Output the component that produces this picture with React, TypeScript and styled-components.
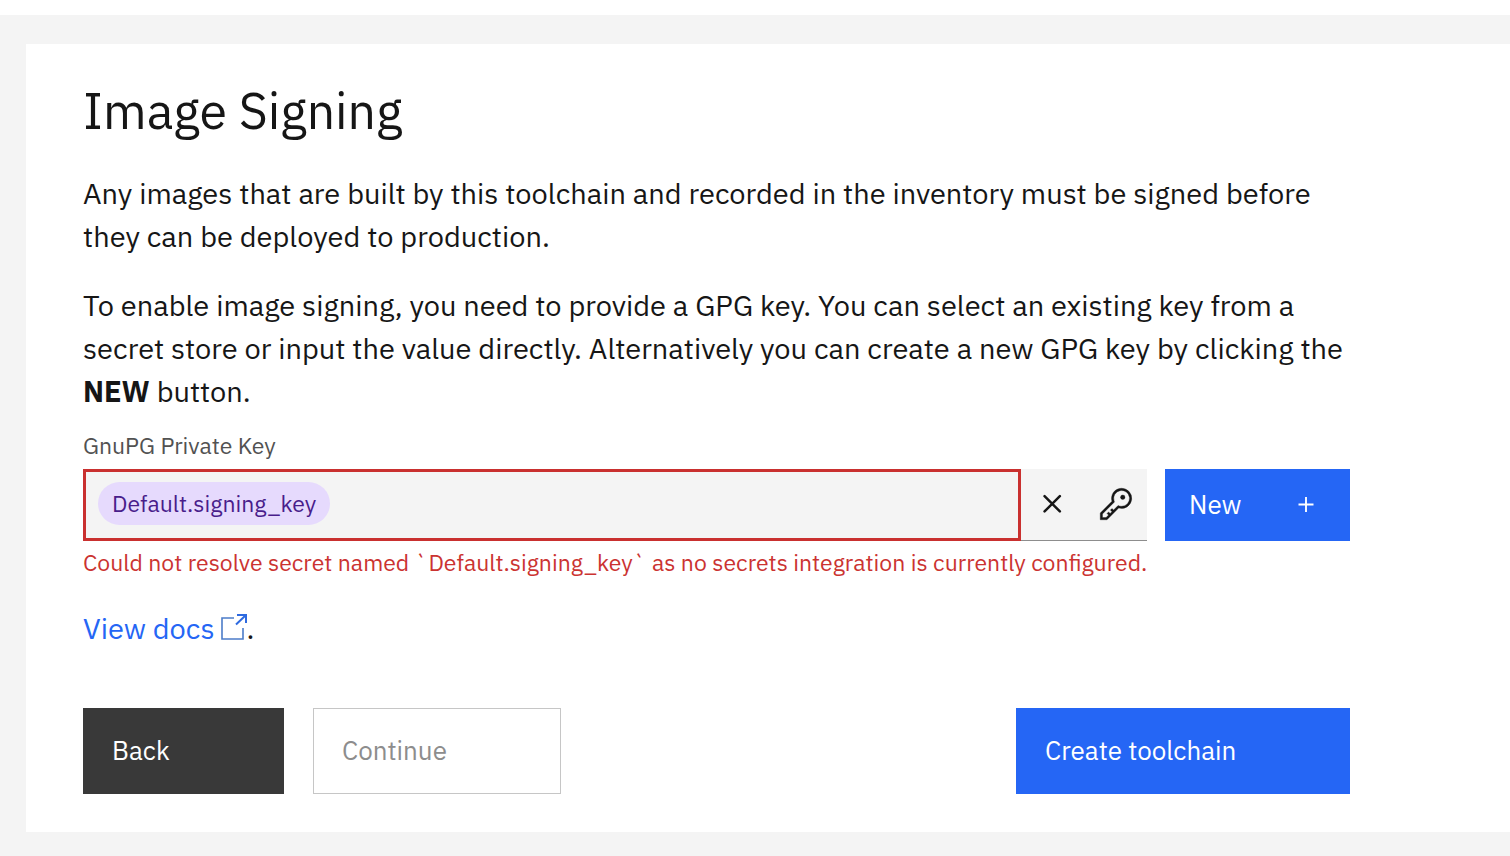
import React, { useState } from 'react';
import styled, { createGlobalStyle } from 'styled-components';

const GlobalStyle = createGlobalStyle`
  *, *::before, *::after { box-sizing: border-box; }
  body {
    margin: 0;
    background: #f4f4f4;
    color: #161616;
    font-family: "IBM Plex Sans", Roboto, "Noto Sans", sans-serif;
    font-size: 29px;
    line-height: 43px;
  }
  button, input { font: inherit; color: inherit; }
`;

const TopBar = styled.header`
  height: 15px;
  background: #fff;
`;

const Page = styled.main`
  padding: 29px 0 24px 26px;
`;

const Card = styled.section`
  background: #fff;
  padding: 35px 57px 38px;
`;

const Content = styled.form`
  max-width: 1267px;
`;

const Title = styled.h1`
  margin: 0;
  font-size: 50px;
  font-weight: 400;
  line-height: 64px;
`;

const Paragraph = styled.p`
  margin: 29px 0 0;

  & + & { margin-top: 26px; }
`;

const FieldLabel = styled.label`
  display: block;
  margin: 16px 0 8px;
  font-size: 23px;
  line-height: 32px;
  color: #525252;
`;

const FieldRow = styled.div`
  display: flex;
  gap: 18px;
  height: 72px;
`;

const FieldGroup = styled.div`
  display: flex;
  flex: 1;
  min-width: 0;
  background: #f4f4f4;
`;

const SecretBox = styled.div`
  display: flex;
  flex: 1;
  min-width: 0;
  align-items: center;
  padding: 0 12px;
  border: 3px solid #c9302f;
`;

const Chip = styled.span`
  flex: none;
  margin-bottom: 4px;
  padding: 0 14px;
  border-radius: 22px;
  background: #e6dafd;
  color: #491d8b;
  font-size: 23px;
  line-height: 43px;
`;

const SecretInput = styled.input`
  flex: 1;
  min-width: 0;
  padding: 0 8px;
  border: 0;
  outline: 0;
  background: transparent;
  font-size: 23px;
`;

const FieldActions = styled.div`
  display: flex;
  border-bottom: 1px solid #8d8d8d;
`;

const IconButton = styled.button`
  display: flex;
  align-items: center;
  justify-content: center;
  width: 63px;
  padding: 0 0 2px;
  border: 0;
  background: transparent;
  cursor: pointer;
`;

const Icon = styled.svg<{ $size: number }>`
  display: block;
  flex: none;
  width: ${p => p.$size}px;
  height: ${p => p.$size}px;
  fill: currentColor;
`;

const ErrorText = styled.p`
  margin: 5px 0 0;
  font-size: 23px;
  line-height: 32px;
  color: #cb3331;
`;

const Docs = styled.p`
  margin: 29px 0 0;
`;

const DocsLink = styled.a`
  color: #2566f5;
  text-decoration: none;
`;

const LaunchIcon = styled.svg`
  width: 26px;
  height: 26px;
  margin-left: 6px;
  vertical-align: -1px;
  fill: none;
`;

const ButtonRow = styled.div`
  display: flex;
  gap: 29px;
  margin-top: 58px;
`;

const variants = {
  primary: { background: '#2566f5', color: '#fff', border: '#2566f5' },
  secondary: { background: '#393939', color: '#fff', border: '#393939' },
  disabled: { background: '#fff', color: '#8d8d8d', border: '#c6c6c6' },
};

const Button = styled.button<{
  $variant: keyof typeof variants;
  $width: number;
  $compact?: boolean;
  $end?: boolean;
}>`
  display: flex;
  align-items: center;
  justify-content: space-between;
  flex: none;
  width: ${p => p.$width}px;
  height: ${p => (p.$compact ? 72 : 86)}px;
  padding: 0 28px 2px ${p => (p.$compact ? 23 : 28)}px;
  margin-left: ${p => (p.$end ? 'auto' : '0')};
  border: 1px solid ${p => variants[p.$variant].border};
  background: ${p => variants[p.$variant].background};
  color: ${p => variants[p.$variant].color};
  font-size: 26px;
  line-height: 32px;
  text-align: left;
  cursor: ${p => (p.$variant === 'disabled' ? 'not-allowed' : 'pointer')};
`;

export default function App() {
  const [secret, setSecret] = useState('');

  return (
    <>
      <GlobalStyle />
      <TopBar />
      <Page>
        <Card>
          <Content onSubmit={e => e.preventDefault()}>
            <Title>Image Signing</Title>
            <Paragraph>
              Any images that are built by this toolchain and recorded in the inventory must be
              signed before they can be deployed to production.
            </Paragraph>
            <Paragraph>
              To enable image signing, you need to provide a GPG key. You can select an existing
              key from a secret store or input the value directly. Alternatively you can create a
              new GPG key by clicking the <strong>NEW</strong> button.
            </Paragraph>

            <FieldLabel htmlFor="gpg-key">GnuPG Private Key</FieldLabel>
            <FieldRow>
              <FieldGroup>
                <SecretBox>
                  <Chip>Default.signing_key</Chip>
                  <SecretInput
                    id="gpg-key"
                    value={secret}
                    onChange={e => setSecret(e.target.value)}
                    aria-invalid="true"
                    aria-describedby="gpg-key-error"
                  />
                </SecretBox>
                <FieldActions>
                  <IconButton type="button" aria-label="Clear">
                    <Icon $size={36} viewBox="0 0 32 32">
                      <path
                        d="M8.5 9L22.1 22.6M22.1 9L8.5 22.6"
                        stroke="currentColor"
                        strokeWidth="2.2"
                        strokeLinecap="round"
                      />
                    </Icon>
                  </IconButton>
                  <IconButton type="button" aria-label="Select a secret">
                    <Icon $size={36} viewBox="0 0 32 32" stroke="currentColor" strokeWidth="0.3">
                      <path d="M21,2a8.9977,8.9977,0,0,0-8.6119,11.6118L2,24v6H8L18.3881,19.6118A9,9,0,1,0,21,2Zm0,16a7.0125,7.0125,0,0,1-2.0322-.3022L17.821,17.35l-.8472.8472-3.1811,3.1812L12.4141,20,11,21.4141l1.3787,1.3786-1.5859,1.586L9.4141,23,8,24.4141l1.3787,1.3786L7.1716,28H4V24.8284l9.8023-9.8023.8472-.8474-.3473-1.1467A7,7,0,1,1,21,18Z" />
                      <circle cx="22" cy="10" r="2" />
                    </Icon>
                  </IconButton>
                </FieldActions>
              </FieldGroup>
              <Button type="button" $variant="primary" $width={185} $compact>
                New
                <Icon $size={30} viewBox="0 0 32 32">
                  <path d="M17 15.5V8.5h-2v7H8v2h7v7h2v-7h7v-2z" />
                </Icon>
              </Button>
            </FieldRow>
            <ErrorText id="gpg-key-error">
              Could not resolve secret named `Default.signing_key` as no secrets integration is
              currently configured.
            </ErrorText>

            <Docs>
              <DocsLink href="#docs">
                View docs
                <LaunchIcon viewBox="0 0 26 26" aria-hidden="true">
                  <path d="M13 4H1V25H22V14" stroke="#4c7cc9" strokeWidth="1.6" />
                  <path d="M15 10.5L25 1M16 1H25V9" stroke="#2e6ae0" strokeWidth="2" />
                </LaunchIcon>
              </DocsLink>
              .
            </Docs>

            <ButtonRow>
              <Button type="button" $variant="secondary" $width={201}>Back</Button>
              <Button type="button" $variant="disabled" $width={248} disabled>Continue</Button>
              <Button type="submit" $variant="primary" $width={334} $end>Create toolchain</Button>
            </ButtonRow>
          </Content>
        </Card>
      </Page>
    </>
  );
}
